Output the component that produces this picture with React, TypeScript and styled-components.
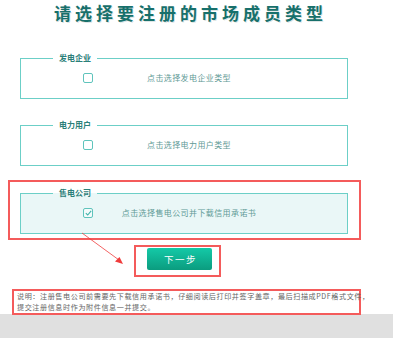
import React from 'react'
import styled, { createGlobalStyle } from 'styled-components'

const GlobalStyle = createGlobalStyle`
  body {
    margin: 0;
    background: #fff;
    font-family: 'Noto Sans CJK SC', 'Noto Sans', sans-serif;
  }
`

const Page = styled.div`
  position: relative;
  width: 393px;
  height: 338px;
  overflow: hidden;
`

const Title = styled.h1`
  margin: 0;
  padding: 2px 12px 0 0;
  height: 22px;
  line-height: 22px;
  font-size: 17px;
  font-weight: 700;
  letter-spacing: 4px;
  text-align: center;
  color: #17706b;
  text-shadow: 1px 1px 0 rgba(0, 60, 55, 0.15);
`

const List = styled.div`
  display: flex;
  flex-direction: column;
  padding-top: 29px;
`

const Group = styled.fieldset<{ $active?: boolean; $gap?: number }>`
  box-sizing: border-box;
  width: 328px;
  margin: ${(p) => p.$gap ?? 0}px 0 0 ${(p) => (p.$active ? 0 : 20)}px;
  padding: 0;
  min-width: 0;
  border: 1px solid #6ccfc7;
  background: ${(p) => (p.$active ? '#eaf7f7' : '#fff')};
`

const Legend = styled.legend`
  margin-left: 32px;
  padding: 0 6px;
  height: 10px;
  line-height: 10px;
  font-size: 8px;
  font-weight: 700;
  color: #2b8079;
`

const Row = styled.div`
  display: flex;
  align-items: center;
  padding: 10px 0 15px 62px;
`

const Box = styled.span<{ $checked?: boolean }>`
  box-sizing: border-box;
  display: flex;
  align-items: center;
  justify-content: center;
  width: 10px;
  height: 10px;
  border: 1px solid #5fc4bc;
  border-radius: 2px;
  background: ${(p) => (p.$checked ? '#f4fbfb' : '#fff')};
`

const Label = styled.span`
  width: 180px;
  margin-left: 6px;
  text-align: center;
  font-size: 8px;
  letter-spacing: 0.4px;
  line-height: 10px;
  color: #5f9a96;
`

const Highlight = styled.div`
  box-sizing: border-box;
  width: 353px;
  margin: 14px 0 0 8px;
  padding: 6px 0 4px 10px;
  border: 2px solid #f45b5b;
`

const ButtonFrame = styled.div`
  box-sizing: border-box;
  width: 87px;
  margin: 5px 0 0 134px;
  padding: 1px 11px 5px;
  border: 2px solid #f45b5b;
`

const NextButton = styled.button`
  display: block;
  width: 65px;
  height: 22px;
  border: 0;
  border-radius: 2px;
  padding: 0 0 0 2px;
  background: linear-gradient(#14c9a7, #0b9c7f);
  color: #fff;
  font-family: inherit;
  font-size: 9.5px;
  letter-spacing: 1.5px;
  line-height: 22px;
  cursor: pointer;
`

const Note = styled.p`
  box-sizing: border-box;
  width: 349px;
  margin: 12px 0 0 12px;
  padding: 0 0 0 3px;
  border: 2px solid #f45b5b;
  font-size: 7.1px;
  letter-spacing: 0.58px;
  line-height: 11px;
  white-space: nowrap;
  color: #666;
  position: relative;
  z-index: 1;
`

const Footer = styled.div`
  margin-top: -1px;
  height: 24px;
  background: #e0e0e0;
`

const Arrow = styled.svg`
  position: absolute;
  left: 78px;
  top: 229px;
  overflow: visible;
`

const options = [
  { title: '发电企业', text: '点击选择发电企业类型' },
  { title: '电力用户', text: '点击选择电力用户类型' },
]

const Check = () => (
  <svg width="7" height="6" viewBox="0 0 7 6">
    <path d="M0.8 3.2 L2.7 5 L6.2 0.8" fill="none" stroke="#3fb3aa" strokeWidth="1.1" />
  </svg>
)

export default function App() {
  return (
    <Page>
      <GlobalStyle />
      <Title>请选择要注册的市场成员类型</Title>
      <List>
        {options.map((o, i) => (
          <Group key={o.title} $gap={i === 0 ? 0 : 21}>
            <Legend>{o.title}</Legend>
            <Row>
              <Box />
              <Label>{o.text}</Label>
            </Row>
          </Group>
        ))}
        <Highlight>
          <Group $active>
            <Legend>售电公司</Legend>
            <Row>
              <Box $checked>
                <Check />
              </Box>
              <Label>点击选择售电公司并下载信用承诺书</Label>
            </Row>
          </Group>
        </Highlight>
        <ButtonFrame>
          <NextButton>下一步</NextButton>
        </ButtonFrame>
        <Note>
          说明：注册售电公司前需要先下载信用承诺书，仔细阅读后打印并签字盖章，最后扫描成PDF格式文件，
          <br />
          提交注册信息时作为附件信息一并提交。
        </Note>
        <Footer />
      </List>
      <Arrow width="50" height="40">
        <line x1="4" y1="4" x2="41" y2="31" stroke="#f03c3c" strokeWidth="0.8" />
        <polygon points="45,35 37,32.5 41.5,28" fill="#f03c3c" />
      </Arrow>
    </Page>
  )
}
